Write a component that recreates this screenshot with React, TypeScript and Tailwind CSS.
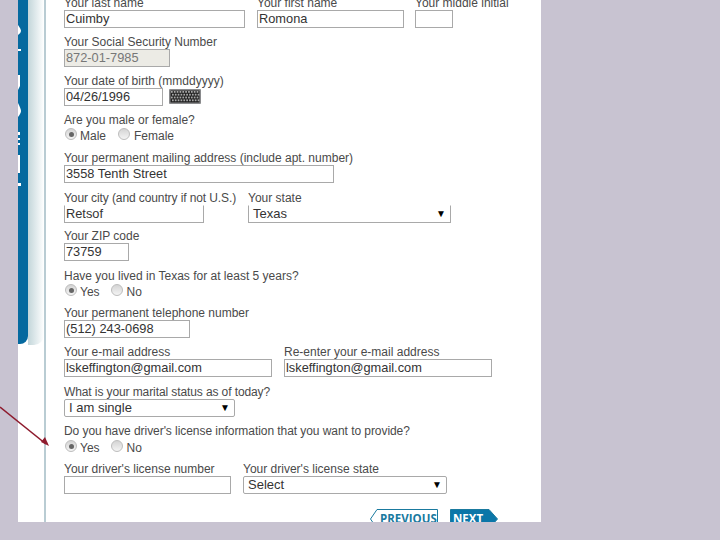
// App.tsx
function Label({ text, className = '' }: { text: string; className?: string }) {
  return <div className={`h-[15px] whitespace-nowrap text-[12px] leading-[16px] text-[#4a4a4a] ${className}`}>{text}</div>;
}

function TextBox({ value = '', disabled = false, className = '' }: { value?: string; disabled?: boolean; className?: string }) {
  const tone = disabled ? 'bg-[#ecebe5] text-[#777]' : 'bg-white text-[#333]';
  return (
    <input
      readOnly
      value={value}
      className={`h-[18px] border border-[#a9a9a9] px-[1px] text-[12.8px] outline-none ${tone} ${className}`}
    />
  );
}

function SelectBox({ value, className = '' }: { value: string; className?: string }) {
  return (
    <div className={`flex h-[18px] items-center justify-between border border-[#a9a9a9] bg-white pl-[4px] pr-[4px] text-[13px] text-[#333] ${className}`}>
      <span>{value}</span>
      <span className="text-[10px] leading-none text-black">▼</span>
    </div>
  );
}

function Radio({ checked = false }: { checked?: boolean }) {
  return (
    <span className="flex h-[12px] w-[12px] items-center justify-center rounded-full border border-[#bdbdbd] bg-gradient-to-b from-[#d4d4d4] to-[#f4f4f4]">
      {checked && <span className="h-[5px] w-[5px] rounded-full bg-[#666]" />}
    </span>
  );
}

function RadioRow({ first, second, gap, className = '' }: { first: string; second: string; gap: string; className?: string }) {
  return (
    <div className={`flex h-[16px] items-start text-[12px] text-[#4a4a4a] ${className}`}>
      <span className="ml-[1px] mt-[1px]"><Radio checked /></span>
      <span className="ml-[3px] mt-[2px] leading-[14px]">{first}</span>
      <span className={`mt-[1px] ${gap}`}><Radio /></span>
      <span className="ml-[4px] mt-[2px] leading-[14px]">{second}</span>
    </div>
  );
}

function Keyboard() {
  const rows = [0, 1, 2, 3];
  const keys = [0, 1, 2, 3, 4, 5, 6, 7, 8, 9];
  return (
    <svg width="32" height="15" viewBox="0 0 32 15" className="ml-[6px] mt-[1px]">
      <rect width="32" height="15" rx="1" fill="#8a8b8d" />
      <rect x="1.5" y="1.5" width="29" height="12" fill="#222" />
      {rows.map((r) =>
        keys.map((k) => <rect key={`${r}-${k}`} x={2 + k * 2.85 + (r % 2)} y={2 + r * 2.8} width="1.7" height="1.8" fill="#a8a8a8" />)
      )}
    </svg>
  );
}

export default function App() {
  return (
    <div className="relative h-[540px] w-[720px] overflow-hidden bg-[#c8c3d1] font-['Liberation_Sans',sans-serif]">
      <div className="ml-[18px] flex h-[522px] w-[523px] overflow-hidden bg-white">
        <div className="relative h-[344px] w-[10px] shrink-0 rounded-br-[8px] bg-[#05699f]">
          <svg width="4" height="190" className="absolute left-0 top-0" fill="#fff">
            <path d="M0 25q3 4 3 6t-3 4z" />
            <rect y="49" width="3" height="2" />
            <path d="M0 75h2v11l-2 4z" />
            <path d="M0 103q3 6 3 8t-3 6z" />
            <rect y="132" width="2" height="3" />
            <rect y="138" width="2" height="2" />
            <rect y="143" width="2" height="2" />
            <rect y="155" width="2" height="18" />
            <rect y="183" width="3" height="3" />
          </svg>
        </div>
        <div className="h-[345px] w-[16px] shrink-0 rounded-br-[10px] bg-gradient-to-r from-[#c3d6da] to-white" />
        <div className="h-full w-[2px] shrink-0 bg-[#b9ccd3]" />
        <div className="ml-[18px] mt-[-5px] flex flex-1 flex-col">
          <div className="flex">
            <div className="flex flex-col"><Label text="Your last name" /><TextBox value="Cuimby" className="w-[181px]" /></div>
            <div className="ml-[12px] flex flex-col"><Label text="Your first name" /><TextBox value="Romona" className="w-[147px]" /></div>
            <div className="ml-[11px] flex flex-col"><Label text="Your middle initial" /><TextBox className="w-[38px]" /></div>
          </div>

          <div className="mt-[6px] flex flex-col items-start">
            <Label text="Your Social Security Number" />
            <TextBox value="872-01-7985" disabled className="w-[106px]" />
          </div>

          <div className="mt-[6px] flex flex-col">
            <Label text="Your date of birth (mmddyyyy)" />
            <div className="flex items-start"><TextBox value="04/26/1996" className="w-[99px]" /><Keyboard /></div>
          </div>

          <div className="mt-[6px]">
            <Label text="Are you male or female?" />
            <RadioRow first="Male" second="Female" gap="ml-[12px]" />
          </div>

          <div className="mt-[7px] flex flex-col items-start">
            <Label text="Your permanent mailing address (include apt. number)" />
            <TextBox value="3558 Tenth Street" className="w-[270px]" />
          </div>

          <div className="mt-[7px] flex">
            <div className="flex w-[140px] flex-col">
              <Label text="Your city (and country if not U.S.)" className="tracking-[-0.1px]" />
              <TextBox value="Retsof" className="w-[140px] border-t-transparent" />
            </div>
            <div className="ml-[44px] flex flex-col">
              <Label text="Your state" />
              <SelectBox value="Texas" className="w-[203px] border-t-transparent" />
            </div>
          </div>

          <div className="mt-[5px] flex flex-col items-start">
            <Label text="Your ZIP code" />
            <TextBox value="73759" className="w-[65px]" />
          </div>

          <div className="mt-[7px]">
            <Label text="Have you lived in Texas for at least 5 years?" />
            <RadioRow first="Yes" second="No" gap="ml-[11px]" className="h-[22px]" />
          </div>

          <div className="flex flex-col items-start">
            <Label text="Your permanent telephone number" />
            <TextBox value="(512) 243-0698" className="w-[126px]" />
          </div>

          <div className="mt-[6px] flex">
            <div className="flex flex-col"><Label text="Your e-mail address" /><TextBox value="lskeffington@gmail.com" className="w-[208px]" /></div>
            <div className="ml-[12px] flex flex-col"><Label text="Re-enter your e-mail address" /><TextBox value="lskeffington@gmail.com" className="w-[208px]" /></div>
          </div>

          <div className="mt-[7px] flex flex-col items-start">
            <Label text="What is your marital status as of today?" className="tracking-[-0.1px]" />
            <SelectBox value="I am single" className="w-[171px] rounded-[2px]" />
          </div>

          <div className="mt-[6px]">
            <Label text="Do you have driver's license information that you want to provide?" className="tracking-[-0.06px]" />
            <RadioRow first="Yes" second="No" gap="ml-[11px]" className="h-[23px] pt-[1px]" />
          </div>

          <div className="flex">
            <div className="flex flex-col"><Label text="Your driver's license number" /><TextBox className="w-[167px]" /></div>
            <div className="ml-[12px] flex flex-col"><Label text="Your driver's license state" /><SelectBox value="Select" className="w-[204px] rounded-[2px]" /></div>
          </div>

          <div className="ml-[306px] mt-[15px] flex gap-[12px]">
            <div className="relative h-[20px] w-[68px]">
              <svg width="68" height="20" className="absolute left-0 top-0">
                <path d="M67.5 .5H7L.5 10 7 19.5H67.5z" fill="#fff" stroke="#1a7a9f" />
              </svg>
              <span className="absolute left-[10px] top-[2px] font-['Open_Sans',sans-serif] text-[11.5px] font-bold leading-[16px] text-[#1a7a9f]">PREVIOUS</span>
            </div>
            <div className="relative h-[20px] w-[48px]">
              <svg width="48" height="20" className="absolute left-0 top-0">
                <path d="M.5 .5H39L47.5 10 39 19.5H.5z" fill="#0b76a8" stroke="#1a7a9f" />
              </svg>
              <span className="absolute left-[3px] top-[2px] font-['Open_Sans',sans-serif] text-[11.5px] font-bold leading-[16px] text-white">NEXT</span>
            </div>
          </div>
        </div>
      </div>

      <svg width="60" height="60" className="absolute left-0 top-[400px]">
        <path d="M0 7L46 44" stroke="#8e1b2e" strokeWidth="1.6" />
        <path d="M49 46L41 42L45 37z" fill="#8e1b2e" />
      </svg>
    </div>
  );
}
